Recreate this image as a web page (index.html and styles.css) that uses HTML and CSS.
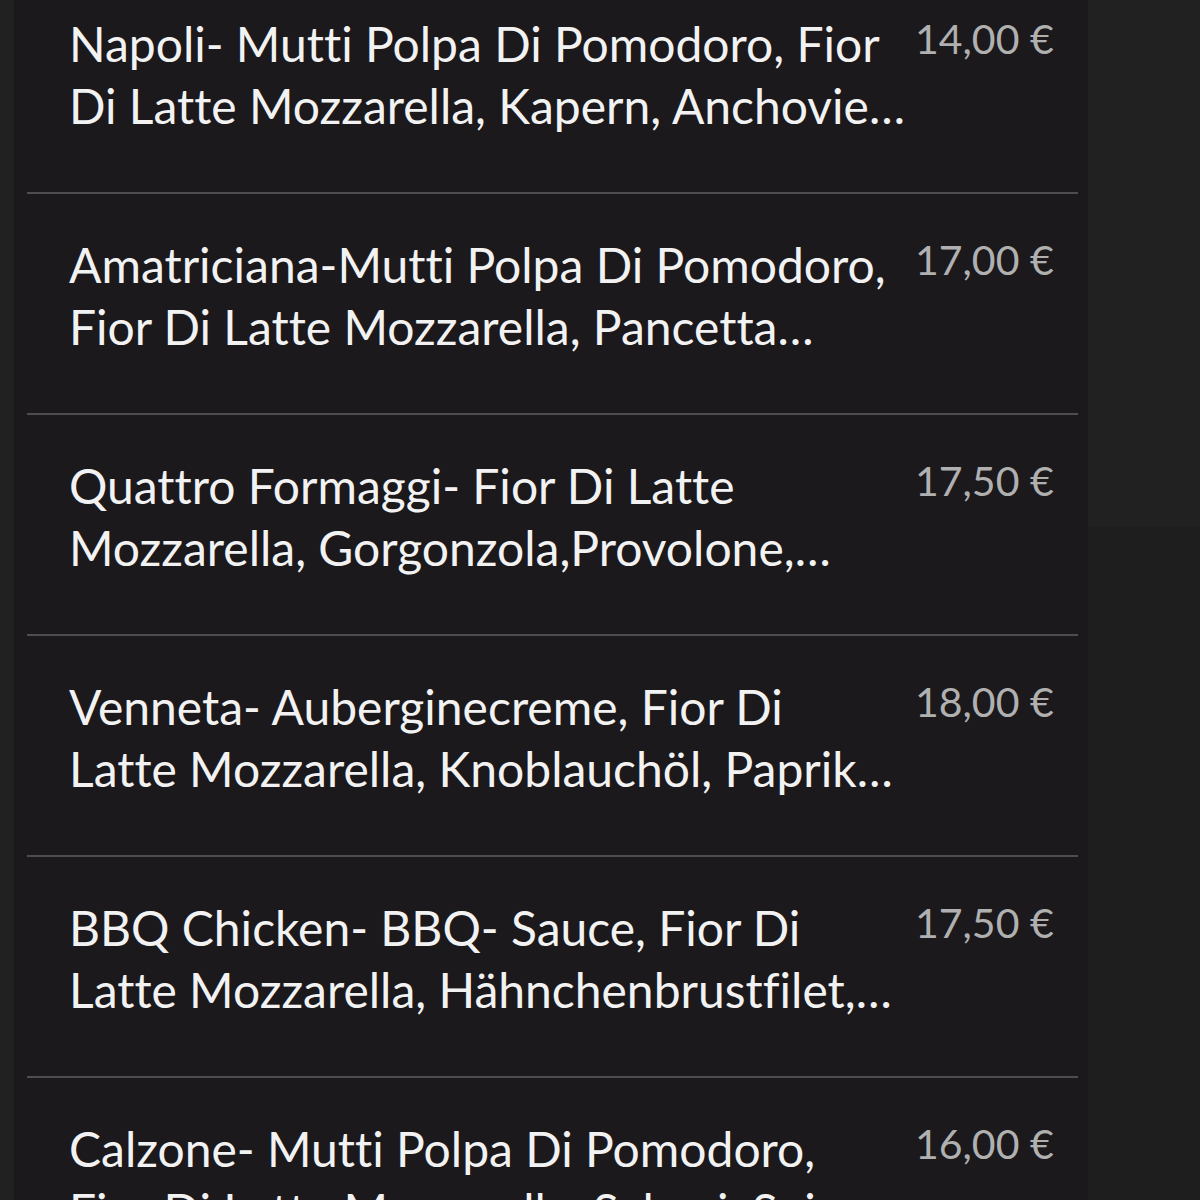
FILE: index.html
```html
<!DOCTYPE html>
<html lang="de">
<head>
    <meta charset="UTF-8">
    <meta name="viewport" content="width=device-width, initial-scale=1.0">
    <title>Pizza</title>
    <link rel="stylesheet" href="styles.css">
</head>
<body>
    <div class="edge"></div>

    <main class="menu">
        <ul class="menu-list">
            <li class="menu-item">
                <p class="item-name">
                    <span class="line">Napoli- Mutti Polpa Di Pomodoro, Fior</span>
                    <span class="line">Di Latte Mozzarella, Kapern, Anchovie…</span>
                </p>
                <span class="item-price">14,00 €</span>
            </li>
            <li class="menu-item">
                <p class="item-name">
                    <span class="line">Amatriciana-Mutti Polpa Di Pomodoro,</span>
                    <span class="line">Fior Di Latte Mozzarella, Pancetta…</span>
                </p>
                <span class="item-price">17,00 €</span>
            </li>
            <li class="menu-item">
                <p class="item-name">
                    <span class="line">Quattro Formaggi- Fior Di Latte</span>
                    <span class="line">Mozzarella, Gorgonzola,Provolone,…</span>
                </p>
                <span class="item-price">17,50 €</span>
            </li>
            <li class="menu-item">
                <p class="item-name">
                    <span class="line">Venneta- Auberginecreme, Fior Di</span>
                    <span class="line">Latte Mozzarella, Knoblauchöl, Paprik…</span>
                </p>
                <span class="item-price">18,00 €</span>
            </li>
            <li class="menu-item">
                <p class="item-name">
                    <span class="line">BBQ Chicken- BBQ- Sauce, Fior Di</span>
                    <span class="line">Latte Mozzarella, Hähnchenbrustfilet,…</span>
                </p>
                <span class="item-price">17,50 €</span>
            </li>
            <li class="menu-item">
                <p class="item-name">
                    <span class="line">Calzone- Mutti Polpa Di Pomodoro,</span>
                    <span class="line">Fior Di Latte Mozzarella, Salami, Spi…</span>
                </p>
                <span class="item-price">16,00 €</span>
            </li>
        </ul>
    </main>

    <aside class="side">
        <div class="side-top"></div>
    </aside>
</body>
</html>
```

FILE: styles.css
```css
body {
    margin: 0;
    height: 1200px;
    overflow: hidden;
    display: flex;
    background: #1e1e1e;
    font-family: 'Lato', sans-serif;
    font-variant-ligatures: none;
}

.edge {
    width: 14px;
    background: #222122;
}

.menu {
    width: 1074px;
    background: #1b191c;
}

.menu-list {
    list-style: none;
    margin: -27px 0 0 0;
    padding: 0;
}

.menu-item {
    display: flex;
    align-items: flex-start;
    margin: 0 10px 0 13px;
    padding: 40px 28px 55px 42px;
    height: 124px;
    border-bottom: 2px solid #4d4c4e;
    box-sizing: content-box;
}

.item-name {
    flex: none;
    width: 824px;
    min-width: 0;
    margin: 0;
    font-size: 48px;
    line-height: 62px;
    color: #f2f2f2;
}

/* the app cuts the description after two lines */
.line {
    display: block;
    white-space: nowrap;
}

.item-price {
    margin-left: 22px;
    margin-top: 3px;
    font-size: 41px;
    line-height: 46px;
    color: #b0b0b0;
    white-space: nowrap;
}

.side {
    flex: 1;
    background: #1e1e1e;
}

.side-top {
    height: 527px;
    background: #212121;
}
```
